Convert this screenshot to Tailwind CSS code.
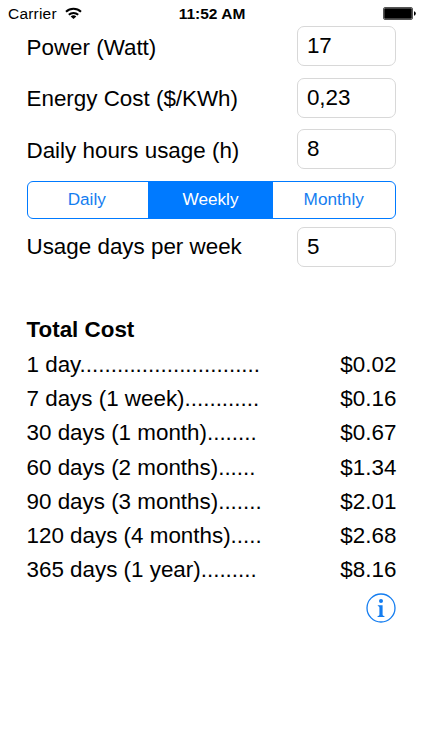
<!DOCTYPE html>
<html lang="en">
<head>
<meta charset="utf-8">
<meta name="viewport" content="width=device-width, initial-scale=1">
<title>Energy Cost</title>
<script src="https://cdn.jsdelivr.net/npm/@tailwindcss/browser@4"></script>
</head>
<body class="bg-white text-black font-['Liberation_Sans',Arial,sans-serif]">
<div class="w-[423px] h-[750px] overflow-hidden flex flex-col">
  <header class="h-[26px] shrink-0 grid grid-cols-3 items-center pl-2 pr-[7px] text-[15.5px] leading-[28px]">
    <div class="flex items-center gap-[8px]">
      <span class="tracking-[0.2px]">Carrier</span>
      <svg class="mb-[2px]" width="17" height="13" viewBox="0 0 17 13" fill="none" stroke="#000" stroke-width="2"><path d="M1 4.8a11 11 0 0 1 15 0M3.8 7.8a7 7 0 0 1 9.4 0"/><path d="M8.5 12 5.7 9.6a4.2 4.2 0 0 1 5.6 0z" fill="#000" stroke="none"/></svg>
    </div>
    <div class="text-center font-bold whitespace-nowrap">11:52 AM</div>
    <svg class="justify-self-end mb-[2px]" width="33" height="13" viewBox="0 0 33 13"><rect x=".5" y=".5" width="29" height="12" rx="1.5" fill="#fff" stroke="#555"/><rect x="1.2" y="1.2" width="27.6" height="10.6" rx=".7"/><path d="M31 4.3q1.8.5 1.8 2.2T31 8.7z"/></svg>
  </header>
  <main class="pl-[26.5px] pr-[26.6px] text-[22.4px]">
    <div class="flex flex-col gap-[11.6px] pt-[0.2px]">
      <label class="h-[40px] flex items-center justify-between"><span class="pt-[3px]">Power (Watt)</span><span class="w-[99.5px] h-[40px] border border-[#d8d8d8] rounded-[7px] pl-[9px] leading-[38px]">17</span></label>
      <label class="h-[40px] flex items-center justify-between"><span class="pt-[2px]">Energy Cost ($/KWh)</span><span class="w-[99.5px] h-[40px] border border-[#d8d8d8] rounded-[7px] pl-[9px] leading-[37px]">0,23</span></label>
      <label class="h-[40px] flex items-center justify-between"><span class="pt-[2px]">Daily hours usage (h)</span><span class="w-[99.5px] h-[40px] border border-[#d8d8d8] rounded-[7px] pl-[9px] leading-[38px]">8</span></label>
    </div>
    <div class="mt-[11.8px] h-[38px] flex overflow-hidden rounded-[6px] border-[1.3px] border-[#007aff] text-[17.2px] leading-[35px] text-[#147df0] text-center">
      <div class="w-[120.5px] pr-[2px]">Daily</div>
      <div class="w-[125px] bg-[#007aff] text-white">Weekly</div>
      <div class="flex-1 pr-[1px]">Monthly</div>
    </div>
    <label class="mt-[8px] h-[40px] flex items-center justify-between"><span>Usage days per week</span><span class="w-[99.5px] h-[40px] border border-[#d8d8d8] rounded-[7px] pl-[9px] leading-[37px]">5</span></label>
    <h1 class="mt-[46px] h-[34.3px] leading-[34.3px] font-bold">Total Cost</h1>
    <div class="pt-[0.2px] leading-[34.3px]">
      <div class="flex justify-between"><span>1 day.............................</span><span>$0.02</span></div>
      <div class="flex justify-between"><span>7 days (1 week)............</span><span>$0.16</span></div>
      <div class="flex justify-between"><span>30 days (1 month)........</span><span>$0.67</span></div>
      <div class="flex justify-between"><span>60 days (2 months)......</span><span>$1.34</span></div>
      <div class="flex justify-between"><span>90 days (3 months).......</span><span>$2.01</span></div>
      <div class="flex justify-between"><span>120 days (4 months).....</span><span>$2.68</span></div>
      <div class="flex justify-between"><span>365 days (1 year).........</span><span>$8.16</span></div>
    </div>
    <div class="flex justify-end mt-[5.3px]">
      <svg width="30" height="30" viewBox="0 0 30 30" fill="#147df0"><circle cx="15" cy="15" r="14" fill="none" stroke="#147df0" stroke-width="1.3"/><circle cx="15" cy="8" r="2"/><path d="M11.8 12.2h4.8v9.6q0 1.2 1.8 1.3v.9h-6.8v-.9q1.8-.1 1.8-1.3v-7.4q0-1.2-1.6-1.3z"/></svg>
    </div>
  </main>
</div>
</body>
</html>
